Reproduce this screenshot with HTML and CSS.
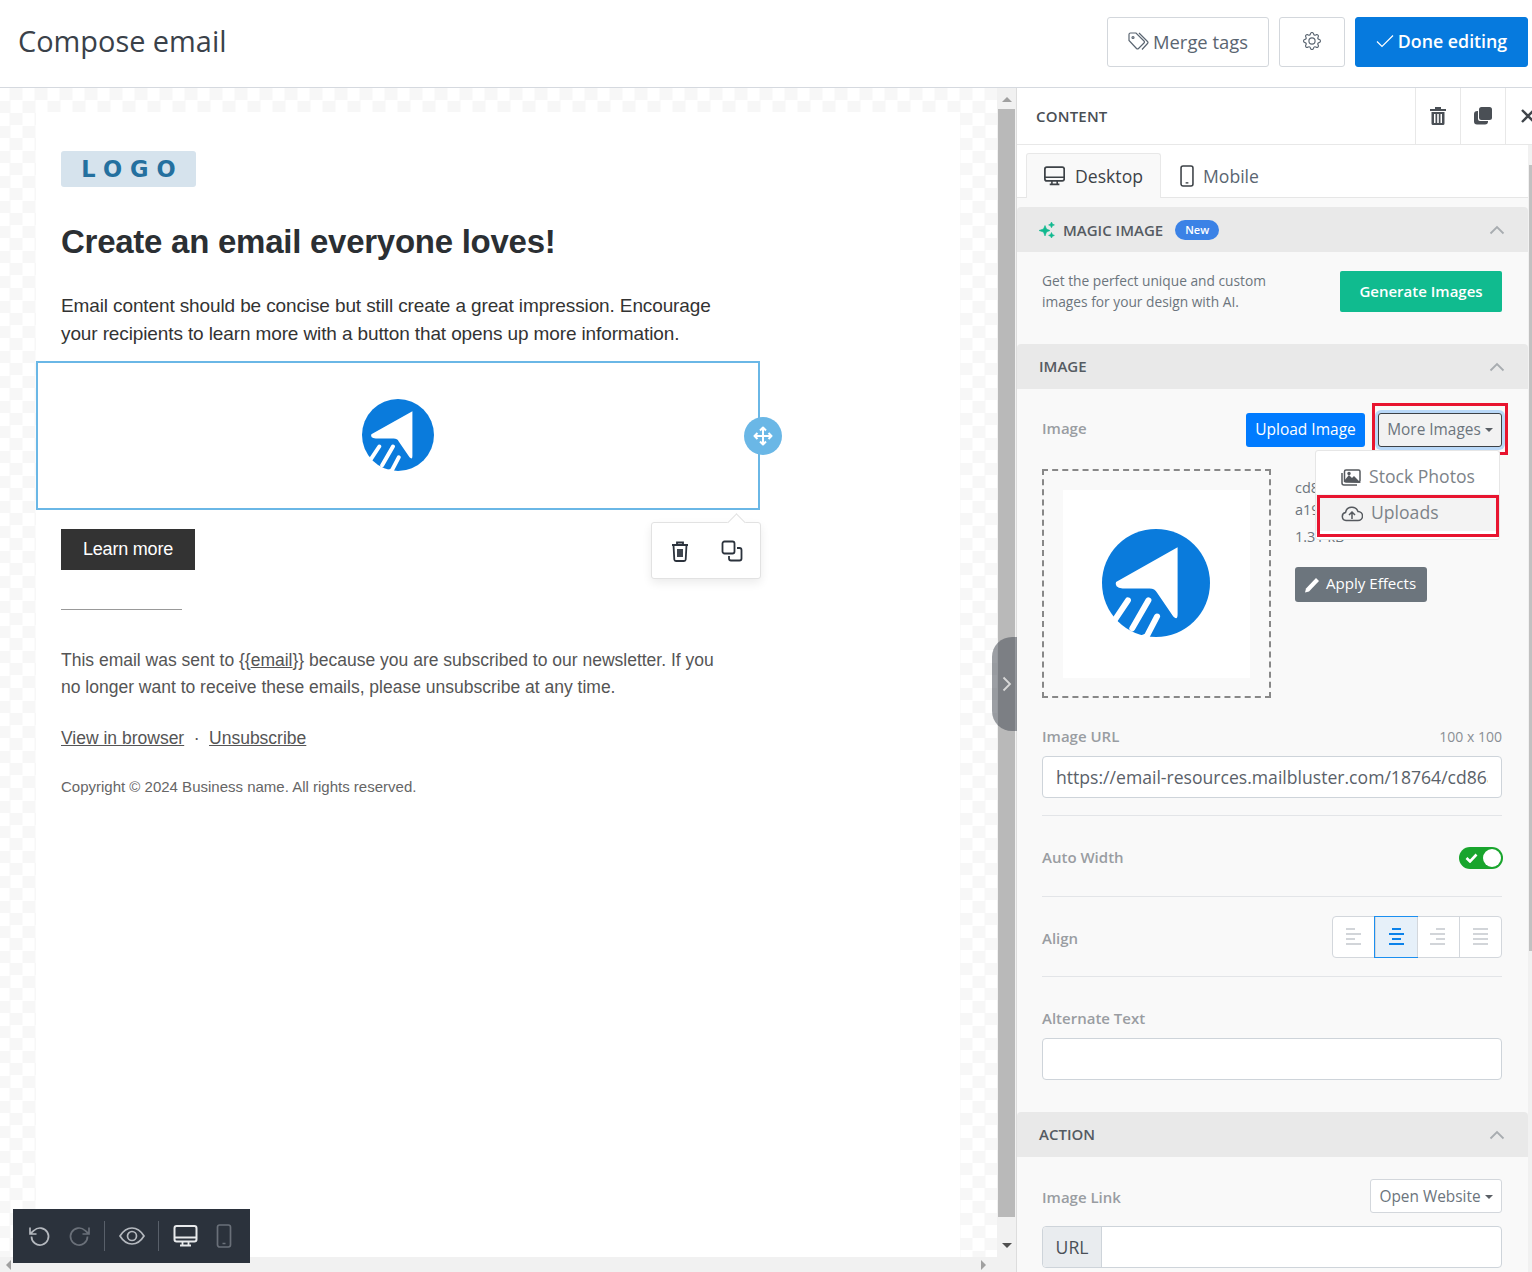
FILE: index.html
```html
<!DOCTYPE html>
<html lang="en">
<head>
    <meta charset="UTF-8">
    <title>Compose email</title>
    <link rel="stylesheet" href="styles.css">
</head>
<body>
    <svg class="sprites" width="0" height="0">
        <symbol id="i-desktop" viewBox="0 0 24 24">
            <rect x="1" y="2" width="22" height="15.5" rx="2.2" fill="none" stroke="currentColor" stroke-width="2"/>
            <path d="M1 13.5h22M9 17.5v3.5M15 17.5v3.5M6.5 21.5h11" fill="none" stroke="currentColor" stroke-width="1.8"/>
        </symbol>
        <symbol id="i-mobile" viewBox="0 0 16 24">
            <rect x="1.5" y="1" width="13" height="22" rx="2.2" fill="none" stroke="currentColor" stroke-width="1.7"/>
            <path d="M6.5 19.5h3" stroke="currentColor" stroke-width="1.5"/>
        </symbol>
        <symbol id="i-chevron" viewBox="0 0 16 10">
            <path d="M1.5 8.5 8 2l6.5 6.5" fill="none" stroke="currentColor" stroke-width="1.8"/>
        </symbol>
        <symbol id="i-logo" viewBox="0 0 100 100">
            <circle cx="50" cy="50" r="50" fill="#0a7bdc"/>
            <path d="M70 17 13 49q-2 5 6 6l25 0q5 0 7 4l15 22q4 4 4-2z" fill="#fff"/>
            <path d="M24 66 8 90M43 66 28 92M51 81 39 104" stroke="#fff" stroke-width="5.5" stroke-linecap="round" fill="none"/>
            <path d="M-2 78 8 82 20 93 32 100 40 97 46 104 -2 104z" fill="#fff"/>
        </symbol>
    </svg>

    <header class="topbar">
        <h1 class="page-title">Compose email</h1>
        <div class="topbar-actions">
            <button class="btn-top merge">
                <svg width="21" height="19" viewBox="0 0 21 19" fill="none" stroke="currentColor" stroke-width="1.2"><path d="M1 2.500q0-1.500 1.500-1.500H8l8 8q1 1 0 2l-5.500 5.500q-1 1-2 0L1 8.500z"/><path d="M11 1l8.500 8.500q1 1 0 2L14 17.500"/><circle cx="5" cy="5.500" r="1"/></svg>
                Merge tags
            </button>
            <button class="btn-top gear">
                <svg width="18" height="18" viewBox="0 0 16 16" fill="currentColor"><path d="M8 4.754a3.246 3.246 0 1 0 0 6.492 3.246 3.246 0 0 0 0-6.492zM5.754 8a2.246 2.246 0 1 1 4.492 0 2.246 2.246 0 0 1-4.492 0z"/><path d="M9.796 1.343c-.527-1.79-3.065-1.79-3.592 0l-.094.319a.873.873 0 0 1-1.255.52l-.292-.16c-1.64-.892-3.433.902-2.54 2.541l.159.292a.873.873 0 0 1-.52 1.255l-.319.094c-1.79.527-1.79 3.065 0 3.592l.319.094a.873.873 0 0 1 .52 1.255l-.16.292c-.892 1.64.901 3.434 2.541 2.54l.292-.159a.873.873 0 0 1 1.255.52l.094.319c.527 1.79 3.065 1.79 3.592 0l.094-.319a.873.873 0 0 1 1.255-.52l.292.16c1.64.893 3.434-.902 2.54-2.541l-.159-.292a.873.873 0 0 1 .52-1.255l.319-.094c1.79-.527 1.79-3.065 0-3.592l-.319-.094a.873.873 0 0 1-.52-1.255l.16-.292c.893-1.64-.902-3.433-2.541-2.54l-.292.159a.873.873 0 0 1-1.255-.52l-.094-.319zm-2.633.283c.246-.835 1.428-.835 1.674 0l.094.319a1.873 1.873 0 0 0 2.693 1.115l.291-.16c.764-.415 1.6.42 1.184 1.185l-.159.292a1.873 1.873 0 0 0 1.116 2.692l.318.094c.835.246.835 1.428 0 1.674l-.319.094a1.873 1.873 0 0 0-1.115 2.693l.16.291c.415.764-.42 1.6-1.185 1.184l-.291-.159a1.873 1.873 0 0 0-2.693 1.116l-.094.318c-.246.835-1.428.835-1.674 0l-.094-.319a1.873 1.873 0 0 0-2.692-1.115l-.292.16c-.764.415-1.6-.42-1.184-1.185l.159-.291A1.873 1.873 0 0 0 1.945 8.930l-.319-.094c-.835-.246-.835-1.428 0-1.674l.319-.094A1.873 1.873 0 0 0 3.060 4.377l-.16-.292c-.415-.764.42-1.6 1.185-1.184l.292.159a1.873 1.873 0 0 0 2.692-1.115l.094-.319z"/></svg>
            </button>
            <button class="btn-top done">
                <svg width="18" height="14" viewBox="0 0 18 14" fill="none" stroke="currentColor" stroke-width="1.2"><path d="M1 7.500l5 5L17 1.500"/></svg>
                Done editing
            </button>
        </div>
    </header>

    <main class="workspace">
        <section class="canvas">
            <div class="stage">
                <div class="sheet">
                    <div class="logo-badge">LOGO</div>
                    <h2 class="mail-heading">Create an email everyone loves!</h2>
                    <p class="mail-text">Email content should be concise but still create a great impression. Encourage your recipients to learn more with a button that opens up more information.</p>
                    <div class="image-block">
                        <svg class="mail-logo"><use href="#i-logo"/></svg>
                        <div class="move-handle">
                            <svg width="20" height="20" viewBox="0 0 20 20" fill="none" stroke="#fff" stroke-width="2"><path d="M10 2v16M2 10h16"/><path d="M7 4.500 10 1.500l3 3M7 15.500l3 3 3-3M4.500 7 1.500 10l3 3M15.500 7l3 3-3 3" stroke-linejoin="round"/></svg>
                        </div>
                        <div class="block-popover">
                            <svg width="20" height="22" viewBox="0 0 20 22" fill="none" stroke="#2b323c" stroke-width="1.8"><path d="M2 5h16M7 5V2.500h6V5M3.500 5l.8 14.500q.1 1.500 1.700 1.500h8q1.600 0 1.700-1.500L16.500 5M8 9v8M10 9v8M12 9v8"/></svg>
                            <svg width="22" height="22" viewBox="0 0 22 22" fill="none" stroke="#2b323c" stroke-width="1.8"><rect x="1.500" y="1.500" width="12" height="12" rx="2"/><path d="M16 8h2.500q2 0 2 2v8.500q0 2-2 2H10q-2 0-2-2V16"/></svg>
                        </div>
                    </div>
                    <a class="mail-button">Learn more</a>
                    <div class="mail-rule"></div>
                    <p class="mail-small">This email was sent to {{<u>email</u>}} because you are subscribed to our newsletter. If you no longer want to receive these emails, please unsubscribe at any time.</p>
                    <p class="mail-links"><u>View in browser</u><span class="dot">·</span><u>Unsubscribe</u></p>
                    <p class="mail-copy">Copyright © 2024 Business name. All rights reserved.</p>
                </div>
                <div class="hscroll">
                    <span class="arrow-left"></span>
                    <span class="arrow-right"></span>
                </div>
                <div class="toolbar">
                    <svg class="tool" width="24" height="24" viewBox="0 0 24 24" fill="none" stroke="currentColor" stroke-width="1.700"><path d="M4.500 12.500A8.500 8.500 0 1 0 7 6.500L3 10M3 3.500V10h6.500"/></svg>
                    <svg class="tool off" width="24" height="24" viewBox="0 0 24 24" fill="none" stroke="currentColor" stroke-width="1.700"><path d="M19.500 12.500A8.500 8.500 0 1 1 17 6.500l4 3.500M21 3.500V10h-6.500"/></svg>
                    <span class="tool-sep"></span>
                    <svg class="tool eye" width="26" height="20" viewBox="0 0 26 20" fill="none" stroke="currentColor" stroke-width="1.700"><path d="M1 10q5-8 12-8t12 8q-5 8-12 8T1 10z"/><circle cx="13" cy="10" r="4.500"/></svg>
                    <span class="tool-sep"></span>
                    <svg class="tool bright" width="27" height="24"><use href="#i-desktop"/></svg>
                    <svg class="tool off" width="18" height="24"><use href="#i-mobile"/></svg>
                </div>
            </div>
            <div class="vscroll">
                <span class="arrow-up"></span>
                <div class="vthumb"></div>
                <span class="arrow-down"></span>
            </div>
            <div class="collapse-tab">
                <svg width="10" height="16" viewBox="0 0 10 16" fill="none" stroke="#d8d8d8" stroke-width="1.800"><path d="M1.500 1.500 8 8l-6.500 6.500"/></svg>
            </div>
        </section>

        <aside class="sidebar">
            <div class="side-head">
                <span class="side-title">CONTENT</span>
                <span class="head-cell">
                    <svg width="16" height="18" viewBox="0 0 16 18" fill="#4a4f55"><path d="M0 2h16v2H0zM5 0h6v2H5zM1.500 5h13v11.500q0 1.500-1.500 1.500H3q-1.500 0-1.500-1.500zM4 7v9h1.500V7zm3.200 0v9h1.600V7zm3.300 0v9H12V7z" fill-rule="evenodd"/></svg>
                </span>
                <span class="head-cell">
                    <svg width="18" height="18" viewBox="0 0 18 18" fill="#4a4f55"><rect x="5" y="0" width="13" height="13" rx="2.500"/><path d="M3.500 4H4v8q0 2 2 2h8v.5q0 3-3 3H3q-3 0-3-3V7q0-3 3.500-3z"/></svg>
                </span>
                <span class="head-cell">
                    <svg width="16" height="16" viewBox="0 0 16 16" stroke="#3f444a" stroke-width="2.400"><path d="M2 2l12 12M14 2 2 14"/></svg>
                </span>
            </div>
            <div class="side-scroll">
                <div class="side-inner">
                    <div class="tabs">
                        <div class="tab active"><svg width="24" height="24"><use href="#i-desktop"/></svg>Desktop</div>
                        <div class="tab"><svg width="16" height="22"><use href="#i-mobile"/></svg>Mobile</div>
                    </div>

                    <div class="section-head first">
                        <svg class="spark" width="16" height="16" viewBox="0 0 16 16" fill="#10b98f" stroke="#10b98f" stroke-width=".6"><path d="M6 3.500 7.500 7 11 8.500 7.500 10 6 14 4.500 10 0 8.500 4.500 7zM12.500 0l.9 2 2 .9-2 .9-.9 2-.9-2-2-.9 2-.9zM12.500 10.500l.9 2 2 .9-2 .9-.9 1.700-.9-1.700-2-.9 2-.9z"/></svg>
                        <span>MAGIC IMAGE</span>
                        <span class="new-pill">New</span>
                        <svg class="chev" width="16" height="10"><use href="#i-chevron"/></svg>
                    </div>
                    <div class="magic-body">
                        <p class="magic-text">Get the perfect unique and custom images for your design with AI.</p>
                        <button class="btn-generate">Generate Images</button>
                    </div>

                    <div class="section-head">
                        <span class="head-label">IMAGE</span>
                        <svg class="chev" width="16" height="10"><use href="#i-chevron"/></svg>
                    </div>
                    <div class="section-body">
                        <div class="image-row">
                            <span class="field-label">Image</span>
                            <button class="btn-upload">Upload Image</button>
                            <div class="more-wrap">
                                <button class="btn-more">More Images<i class="caret"></i></button>
                                <span class="red-box box-more"></span>
                                <div class="dropdown">
                                    <div class="drop-item">
                                        <svg width="20" height="17" viewBox="0 0 20 17" fill="none" stroke="currentColor" stroke-width="1.500"><rect x="3.500" y="1" width="15.500" height="12" rx="1.500"/><path d="M1 4v10q0 2 2 2h13"/><path d="M4 12l4-5 3 3 2-2 5 5z" fill="currentColor"/><circle cx="8" cy="4.500" r="1" fill="currentColor"/></svg>
                                        Stock Photos
                                    </div>
                                    <div class="drop-item hover">
                                        <svg width="22" height="17" viewBox="0 0 22 17" fill="none" stroke="currentColor" stroke-width="1.500"><path d="M6 15.500H5A4 4 0 0 1 4.500 7.600 6.500 6.500 0 0 1 17 6.500a4.500 4.500 0 0 1 0 9h-1M6 15.500h10M11 14V7.500M8 10l3-3 3 3"/></svg>
                                        Uploads
                                        <span class="red-box box-uploads"></span>
                                    </div>
                                </div>
                            </div>
                        </div>
                        <div class="image-preview">
                            <div class="dropzone">
                                <div class="dropzone-inner"><svg width="108" height="108"><use href="#i-logo"/></svg></div>
                            </div>
                            <div class="file-info">
                                <div class="file-name">cd86f2<br>a19e0b</div>
                                <div class="file-size">1.31 kB</div>
                                <button class="btn-effects">
                                    <svg width="16" height="16" viewBox="0 0 16 16" fill="#fff"><path d="M12 1l3 3L5 14.500 1 15.500 2 11.500z"/></svg>
                                    Apply Effects
                                </button>
                            </div>
                        </div>
                        <div class="label-row">
                            <span class="field-label">Image URL</span>
                            <span class="dims">100 x 100</span>
                        </div>
                        <div class="text-input"><span class="input-value">https://email-resources.mailbluster.com/18764/cd86a</span></div>
                        <hr class="rule first-rule">
                        <div class="option-row width-row">
                            <span class="field-label">Auto Width</span>
                            <span class="toggle">
                                <svg width="13" height="10" viewBox="0 0 13 10" fill="none" stroke="#fff" stroke-width="2.600"><path d="M1.500 5l3.500 3.500L11.500 1.500"/></svg>
                                <i class="knob"></i>
                            </span>
                        </div>
                        <hr class="rule">
                        <div class="option-row align-row">
                            <span class="field-label">Align</span>
                            <div class="align-group">
                                <span class="align-btn left"><i></i><i></i><i></i><i></i></span>
                                <span class="align-btn center on"><i></i><i></i><i></i><i></i></span>
                                <span class="align-btn right"><i></i><i></i><i></i><i></i></span>
                                <span class="align-btn full"><i></i><i></i><i></i><i></i></span>
                            </div>
                        </div>
                        <hr class="rule">
                        <div class="label-row alt-label">
                            <span class="field-label">Alternate Text</span>
                        </div>
                        <div class="text-input"></div>
                    </div>

                    <div class="section-head action">
                        <span class="head-label">ACTION</span>
                        <svg class="chev" width="16" height="10"><use href="#i-chevron"/></svg>
                    </div>
                    <div class="section-body action-body">
                        <div class="link-row">
                            <span class="field-label">Image Link</span>
                            <button class="btn-select">Open Website<i class="caret"></i></button>
                        </div>
                        <div class="input-group">
                            <span class="addon">URL</span>
                            <span class="addon-field"></span>
                        </div>
                    </div>
                </div>
                <div class="side-track"><div class="side-thumb"></div></div>
            </div>
        </aside>
    </main>
</body>
</html>
```

FILE: styles.css
```css
* {
    box-sizing: border-box;
}
body {
    margin: 0;
    height: 1272px;
    overflow: hidden;
    background: #fff;
    font-family: "Open Sans", sans-serif;
    color: #495057;
}
.sprites {
    position: absolute;
}
button {
    font-family: inherit;
    cursor: pointer;
}

/* top bar */
.topbar {
    height: 88px;
    display: flex;
    align-items: flex-start;
    justify-content: space-between;
    border-bottom: 1px solid #d5d9df;
    padding: 17px 4px 0 18px;
}
.page-title {
    margin: 5px 0 0;
    font-size: 28.900px;
    font-weight: 400;
    line-height: 38px;
    color: #3a4149;
}
.topbar-actions {
    display: flex;
    gap: 10px;
}
.btn-top {
    height: 50px;
    display: flex;
    align-items: center;
    justify-content: center;
    gap: 4px;
    padding: 0 0 2px;
    border: 1px solid #d3d7dc;
    border-radius: 3px;
    background: #fff;
    color: #5a6571;
    font-size: 18.400px;
}
.btn-top.merge {
    width: 162px;
}
.btn-top.gear {
    width: 66px;
}
.btn-top.done {
    width: 173px;
    background: #067ade;
    border-color: #067ade;
    color: #fff;
    font-size: 17.800px;
    font-weight: 600;
}

.workspace {
    display: flex;
    height: 1184px;
}

/* email canvas */
.canvas {
    position: relative;
    display: flex;
    width: 1017px;
    flex: none;
    border-right: 1px solid #ddd;
}
.stage {
    position: relative;
    width: 997px;
    overflow: hidden;
    padding-top: 24px;
    background-color: #fff;
    background-image: conic-gradient(#f7f7f7 25%, transparent 0 50%, #f7f7f7 0 75%, transparent 0);
    background-size: 25px 25px;
    background-position: -2.5px 0;
}
.sheet {
    width: 924px;
    height: 1145px;
    margin-left: 36px;
    padding: 39px 0 0 25px;
    background: #fff;
    font-family: "Liberation Sans", Arial, sans-serif;
}
.logo-badge {
    width: 135px;
    height: 36px;
    border-radius: 3px;
    background: #d6e3ed;
    color: #24709f;
    font-family: "DejaVu Sans", sans-serif;
    font-size: 22.500px;
    font-weight: 700;
    line-height: 37px;
    letter-spacing: 8px;
    text-align: center;
    text-indent: 8px;
}
.mail-heading {
    margin: 35px 0 0;
    font-size: 33px;
    line-height: 40px;
    letter-spacing: -0.26px;
    color: #2b2f33;
}
.mail-text {
    width: 670px;
    margin: 30px 0 0;
    font-size: 19px;
    line-height: 28px;
    letter-spacing: -0.12px;
    color: #333;
}
.image-block {
    position: relative;
    width: 724px;
    height: 149px;
    margin: 13px 0 0 -25px;
    display: flex;
    align-items: center;
    justify-content: center;
    border: 2px solid #6ab7e6;
}
.mail-logo {
    width: 72px;
    height: 72px;
    margin-bottom: 2px;
}
.move-handle {
    position: absolute;
    right: -24px;
    top: 54px;
    width: 38px;
    height: 38px;
    display: flex;
    align-items: center;
    justify-content: center;
    border-radius: 50%;
    background: #6ab7e6;
}
.block-popover {
    position: absolute;
    left: 613px;
    top: 159px;
    width: 110px;
    height: 57px;
    display: flex;
    align-items: center;
    gap: 31px;
    padding-left: 18px;
    background: #fff;
    border: 1px solid #e2e2e2;
    border-radius: 3px;
    box-shadow: 0 4px 10px rgba(0, 0, 0, 0.08);
}
.block-popover::before {
    content: "";
    position: absolute;
    right: 17px;
    top: -7px;
    width: 12px;
    height: 12px;
    background: #fff;
    border-left: 1px solid #e2e2e2;
    border-top: 1px solid #e2e2e2;
    transform: rotate(45deg);
}
.mail-button {
    display: block;
    width: 134px;
    height: 41px;
    margin-top: 19px;
    background: #333;
    color: #fff;
    font-size: 18px;
    line-height: 41px;
    letter-spacing: -0.2px;
    text-align: center;
}
.mail-rule {
    width: 121px;
    height: 1px;
    margin-top: 39px;
    background: #999;
}
.mail-small {
    width: 670px;
    margin: 37px 0 0;
    font-size: 17.500px;
    line-height: 27px;
    color: #555;
}
.mail-links {
    margin: 24px 0 0;
    font-size: 17.500px;
    line-height: 27px;
    color: #555;
}
.mail-links .dot {
    margin: 0 9.500px;
}
.mail-copy {
    margin: 23px 0 0;
    font-size: 15px;
    line-height: 24px;
    color: #666;
}
.hscroll {
    position: absolute;
    left: 0;
    right: 0;
    bottom: 0;
    height: 15px;
    background: #f1f1f1;
}
.arrow-left, .arrow-right, .arrow-up, .arrow-down {
    position: absolute;
    width: 0;
    height: 0;
    border: 5px solid transparent;
}
.arrow-left {
    left: 1px;
    top: 3px;
    border-right-color: #a0a0a0;
}
.arrow-right {
    right: 6px;
    top: 3px;
    border-left-color: #a0a0a0;
}
.toolbar {
    position: absolute;
    left: 13px;
    bottom: 9px;
    width: 237px;
    height: 54px;
    display: flex;
    align-items: center;
    padding-left: 14px;
    background: #2b323c;
    color: #b5b9bf;
}
.tool {
    flex: none;
    margin-right: 17px;
}
.tool.off {
    color: #6a7079;
    margin-right: -1px;
}
.tool.eye {
    margin: 0 0 0 1px;
}
.tool.bright {
    color: #e8eaec;
    margin-right: 16px;
}
.tool-sep {
    width: 1px;
    height: 30px;
    margin: 0 13px;
    background: #59606a;
}
.vscroll {
    position: relative;
    width: 19px;
    background: #f1f1f1;
}
.vthumb {
    position: absolute;
    left: 1px;
    width: 17px;
    top: 21px;
    height: 1108px;
    background: #b9b9b9;
}
.arrow-up {
    left: 5px;
    top: 4px;
    border-bottom-color: #a0a0a0;
}
.arrow-down {
    left: 5px;
    top: 1155px;
    border-top-color: #505050;
}
.collapse-tab {
    position: absolute;
    right: -1px;
    top: 549px;
    width: 25px;
    height: 94px;
    display: flex;
    align-items: center;
    justify-content: center;
    padding-left: 4px;
    border-radius: 20px 0 0 20px;
    background: rgba(75, 80, 90, 0.55);
}

/* right panel */
.sidebar {
    width: 515px;
    flex: none;
    overflow: hidden;
    background: #fff;
}
.side-head {
    height: 57px;
    display: flex;
    align-items: center;
    border-bottom: 1px solid #e8e8e8;
    padding-left: 19px;
}
.side-title {
    width: 379px;
    flex: none;
    font-size: 15px;
    font-weight: 600;
    letter-spacing: 0.2px;
    color: #494e54;
}
.head-cell {
    width: 45px;
    height: 56px;
    flex: none;
    display: flex;
    align-items: center;
    justify-content: center;
    border-left: 1px solid #e8e8e8;
}
.side-scroll {
    display: flex;
    height: 1127px;
}
.side-inner {
    width: 511px;
    flex: none;
    background: #f9f9f9;
}
.side-track {
    width: 4px;
    padding: 20px 0 0 1px;
    background: #f1f1f1;
}
.side-thumb {
    height: 786px;
    background: #c1c1c1;
}
.tabs {
    height: 53px;
    display: flex;
    align-items: flex-end;
    padding-left: 9px;
    background: #fff;
    border-bottom: 1px solid #e6e6e6;
}
.tab {
    height: 45px;
    display: flex;
    align-items: center;
    gap: 8px;
    padding: 0 18px;
    font-size: 17.600px;
    color: #5a6571;
    margin-bottom: -1px;
}
.tab.active {
    width: 135px;
    gap: 10px;
    padding: 0 17px;
    background: #f9f9f9;
    border: 1px solid #e8e8e8;
    border-bottom: 0;
    border-radius: 3px 3px 0 0;
    color: #3d4247;
}
.tab svg {
    color: #3d4247;
}
.section-head {
    height: 45px;
    display: flex;
    align-items: center;
    padding: 0 23px 0 22px;
    background: #e9e9e9;
    border-radius: 4px 4px 0 0;
    font-size: 15px;
    font-weight: 600;
    color: #555b62;
}
.section-head.first {
    margin-top: 9px;
}
.head-label {
    margin-top: -2px;
}
.spark {
    margin-right: 8px;
}
.new-pill {
    margin-left: 12px;
    padding: 0 10px;
    height: 20px;
    border-radius: 10px;
    background: #3b82e6;
    color: #fff;
    font-size: 11px;
    line-height: 20px;
}
.chev {
    margin-left: auto;
    color: #a8acb0;
}
.magic-body {
    height: 92px;
    display: flex;
    align-items: flex-start;
    justify-content: space-between;
    padding: 19px 26px 0 25px;
}
.magic-text {
    width: 260px;
    margin: -1px 0 0;
    font-size: 13.750px;
    line-height: 21px;
    color: #6c757d;
}
.btn-generate {
    width: 162px;
    height: 41px;
    padding: 0 0 2px;
    border: 0;
    border-radius: 2px;
    background: #10bb8f;
    color: #fff;
    font-size: 15px;
    font-weight: 600;
}
.section-body {
    padding: 0 26px 0 25px;
}
.image-row {
    display: flex;
    align-items: center;
    padding-top: 24px;
}
.field-label {
    font-size: 15px;
    font-weight: 600;
    color: #999da2;
}
.image-row .field-label {
    margin-top: -5px;
}
.option-row .field-label {
    margin-top: 2px;
}
.btn-upload {
    height: 34px;
    width: 119px;
    margin-left: auto;
    padding: 0 0 2px;
    border: 0;
    border-radius: 3px;
    background: #007bff;
    color: #fff;
    font-size: 15.500px;
}
.more-wrap {
    position: relative;
    margin-left: 13px;
}
.btn-more {
    width: 124px;
    height: 34px;
    padding: 0 0 2px;
    border: 1px solid #3d4247;
    border-radius: 3px;
    background: #f2f2f2;
    box-shadow: 0 0 0 3px #b9d8f8;
    color: #6c757d;
    font-size: 15.400px;
}
.caret {
    display: inline-block;
    margin-left: 4px;
    vertical-align: 3px;
    border: 4px solid transparent;
    border-top-color: #5a5f65;
    border-bottom: 0;
}
.red-box {
    position: absolute;
    border: 3px solid #e8142f;
    pointer-events: none;
}
.box-more {
    left: -6px;
    top: -10px;
    width: 136px;
    height: 52px;
}
.dropdown {
    position: absolute;
    left: -63px;
    top: 37px;
    width: 185px;
    height: 90px;
    z-index: 2;
    padding-top: 7px;
    background: #fff;
    border: 1px solid #e6e6e6;
    border-radius: 3px;
}
.drop-item {
    position: relative;
    height: 36px;
    display: flex;
    align-items: center;
    gap: 8px;
    padding-left: 25px;
    font-size: 17.600px;
    color: #7d8389;
}
.drop-item svg {
    color: #55595e;
    margin-top: 3px;
}
.drop-item.hover {
    height: 37px;
    padding-bottom: 2px;
    background: #f3f3f3;
}
.box-uploads {
    left: 1px;
    top: 1px;
    width: 182px;
    height: 42px;
}
.image-preview {
    display: flex;
    margin-top: 22px;
}
.dropzone {
    width: 229px;
    height: 229px;
    flex: none;
    padding: 19px;
    border: 2px dashed #888;
}
.dropzone-inner {
    height: 188px;
    display: flex;
    align-items: center;
    justify-content: center;
    padding: 0 2px 2px 0;
    background: #fff;
}
.file-info {
    margin-left: 24px;
    font-size: 14.500px;
    color: #6c757d;
}
.file-name {
    margin-top: 8px;
    line-height: 22px;
    width: 190px;
}
.file-size {
    margin-top: 5px;
    line-height: 22px;
}
.btn-effects {
    display: flex;
    align-items: center;
    gap: 6px;
    width: 132px;
    height: 35px;
    margin-top: 19px;
    padding: 0 0 3px 9px;
    border: 0;
    border-radius: 3px;
    background: #6c757d;
    color: #fff;
    font-size: 15.100px;
}
.btn-effects svg {
    margin-top: 3px;
}
.label-row {
    display: flex;
    justify-content: space-between;
    align-items: center;
    height: 22px;
    margin-top: 27px;
}
.dims {
    font-size: 14px;
    color: #8a8f95;
}
.text-input {
    height: 42px;
    margin-top: 9px;
    padding: 0 13px;
    background: #fff;
    border: 1px solid #ced4da;
    border-radius: 4px;
    font-size: 17.600px;
    line-height: 40px;
    color: #5a6169;
}
.input-value {
    display: block;
    overflow: hidden;
    white-space: nowrap;
}
.rule {
    height: 1px;
    margin: 0;
    border: 0;
    background: #e3e5e8;
}
.first-rule {
    margin-top: 17px;
}
.option-row {
    display: flex;
    justify-content: space-between;
    align-items: center;
}
.width-row {
    height: 80px;
}
.align-row {
    height: 79px;
}
.toggle {
    position: relative;
    width: 44px;
    height: 22px;
    display: flex;
    align-items: center;
    margin: 4px -1px 0 0;
    padding-left: 6px;
    border-radius: 11px;
    background: #19a52d;
}
.knob {
    position: absolute;
    right: 2px;
    top: 2px;
    width: 18px;
    height: 18px;
    border-radius: 50%;
    background: #fff;
}
.align-group {
    width: 170px;
    height: 42px;
    display: flex;
    background: #fff;
    border: 1px solid #d3d7dc;
    border-radius: 4px;
}
.align-btn {
    width: 42px;
    flex: none;
    display: flex;
    flex-direction: column;
    justify-content: center;
    align-items: center;
    gap: 3px;
    border-left: 1px solid #d3d7dc;
}
.align-btn:first-child {
    border-left: 0;
}
.align-btn i {
    display: block;
    width: 15px;
    height: 2px;
    background: #d2d5d9;
}
.align-btn i:nth-child(odd) {
    width: 9px;
}
.align-btn.full i {
    width: 15px;
}
.align-btn.left {
    align-items: flex-start;
    padding-left: 13px;
}
.align-btn.right {
    align-items: flex-end;
    padding-right: 14px;
}
.align-btn.on {
    background: #e6f0f9;
    outline: 1px solid #1b8ff0;
}
.align-btn.on i {
    background: #0b82ea;
}
.alt-label {
    margin-top: 30px;
}
.section-head.action {
    margin-top: 32px;
}
.link-row {
    display: flex;
    justify-content: space-between;
    align-items: center;
    padding-top: 22px;
}
.link-row .field-label {
    margin-top: 2px;
}
.btn-select {
    width: 132px;
    height: 34px;
    padding: 0;
    background: #fff;
    border: 1px solid #d3d7dc;
    border-radius: 3px;
    color: #6c757d;
    font-size: 15.400px;
}
.input-group {
    display: flex;
    height: 42px;
    margin-top: 13px;
    background: #fff;
    border: 1px solid #ced4da;
    border-radius: 4px;
}
.addon {
    width: 59px;
    background: #e9ecef;
    border-right: 1px solid #ced4da;
    border-radius: 4px 0 0 4px;
    text-align: center;
    font-size: 17.600px;
    line-height: 40px;
    color: #495057;
}
.addon-field {
    flex: 1;
}
```
